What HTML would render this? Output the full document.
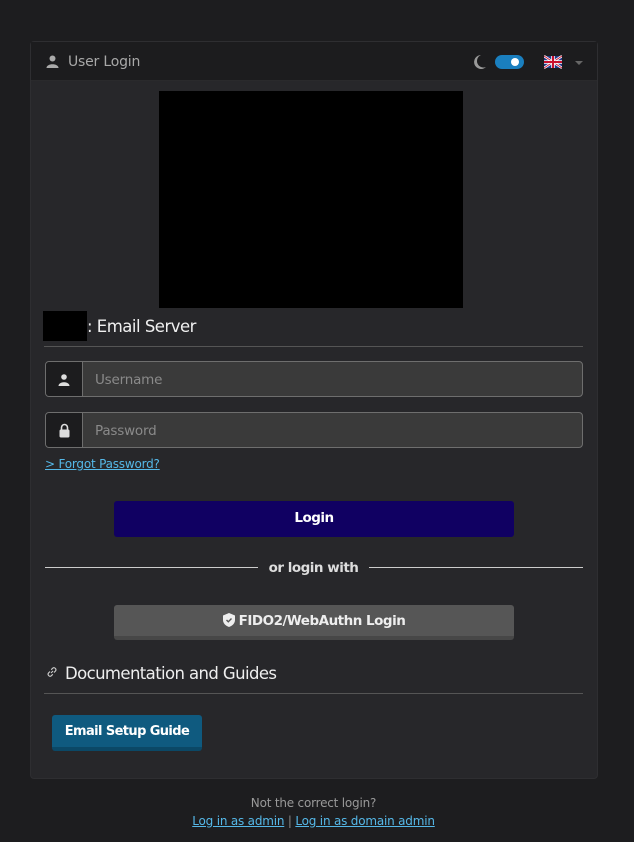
<!DOCTYPE html>
<html><head><meta charset="utf-8"><style>
*{box-sizing:border-box;margin:0;padding:0}
body{width:634px;height:842px;background:#1d1d1f;font-family:"DejaVu Sans","Liberation Sans",sans-serif;position:relative;overflow:hidden;color:#e8e8e8}
.a{position:absolute}
.card{left:30px;top:41px;width:568px;height:738px;background:#27272a;border:1px solid #2e2e31;border-radius:4px}
.hdr{left:31px;top:42px;width:566px;height:39px;background:#1c1c1e;border-bottom:1px solid #2a2a2c}
.inp{left:45px;width:538px;height:36px;border:1px solid #6e6e6e;border-radius:4px;background:#3a3a3a;overflow:hidden}
.inp .ic{position:absolute;left:0;top:0;width:37px;height:100%;background:#1c1c1e;border-right:1px solid #6e6e6e}
.inp span{position:absolute;left:49px;top:10px;font-size:13.5px;color:#8a8a8a;letter-spacing:-0.2px}
a{color:#55b8e8;text-decoration:underline}
.b{font-weight:bold;letter-spacing:-0.5px}
</style></head><body>
<div class="a card"></div>
<div class="a hdr"></div>
<svg class="a" style="left:46px;top:55px" width="13" height="13" viewBox="0 0 13 13"><circle cx="6.5" cy="3.5" r="3" fill="#aaa"/><path d="M0.5 13 C0.5 8 12.5 8 12.5 13Z" fill="#aaa"/></svg>
<div class="a" style="left:68px;top:54px;font-size:14px;color:#a8a8a8;letter-spacing:-0.2px">User Login</div>
<svg class="a" style="left:472px;top:54px" width="15" height="16" viewBox="0 0 15 16"><path d="M9 1 A7 7 0 1 0 14 13 A6 6 0 0 1 9 1Z" fill="#999"/></svg>
<div class="a" style="left:495px;top:55px;width:29px;height:14px;border-radius:7px;background:#1a7fbf"></div>
<div class="a" style="left:511px;top:58px;width:8px;height:8px;border-radius:50%;background:#fff"></div>
<svg class="a" style="left:544px;top:55px" width="18" height="14" viewBox="0 0 60 40"><rect width="60" height="40" fill="#1e3a8a"/><path d="M0 0L60 40M60 0L0 40" stroke="#fff" stroke-width="8"/><path d="M0 0L60 40M60 0L0 40" stroke="#c8102e" stroke-width="3"/><path d="M30 0V40M0 20H60" stroke="#fff" stroke-width="12"/><path d="M30 0V40M0 20H60" stroke="#c8102e" stroke-width="7"/></svg>
<div class="a" style="left:575px;top:61px;border:4px solid transparent;border-top:4px solid #666"></div>
<div class="a" style="left:159px;top:91px;width:304px;height:217px;background:#000"></div>
<div class="a" style="left:43px;top:311px;width:44px;height:30px;background:#000"></div>
<div class="a" style="left:87px;top:317px;font-size:16.5px;color:#f0f0f0;letter-spacing:-0.5px">: Email Server</div>
<div class="a" style="left:44px;top:346px;width:539px;height:1px;background:#555"></div>
<div class="a inp" style="top:361px"><div class="ic"><svg style="position:absolute;left:12px;top:12px" width="12" height="12" viewBox="0 0 12 12"><circle cx="6" cy="3" r="2.8" fill="#ddd"/><path d="M0.5 12C0.5 7 11.5 7 11.5 12Z" fill="#ddd"/></svg></div><span>Username</span></div>
<div class="a inp" style="top:412px"><div class="ic"><svg style="position:absolute;left:13px;top:10px" width="11" height="15" viewBox="0 0 11 15"><path d="M2.5 7V4.5a3 3 0 0 1 6 0V7" stroke="#ddd" stroke-width="1.6" fill="none"/><rect x="0.5" y="6.5" width="10" height="8" rx="1.5" fill="#ddd"/></svg></div><span>Password</span></div>
<a class="a" style="left:45px;top:457px;font-size:12px;letter-spacing:-0.2px">&gt; Forgot Password?</a>
<div class="a b" style="left:114px;top:501px;width:400px;height:36px;background:#100062;border-radius:3px;color:#fff;font-size:13.5px;text-align:center;line-height:35px">Login</div>
<div class="a" style="left:45px;top:567px;width:213px;height:1px;background:#ccc"></div>
<div class="a" style="left:369px;top:567px;width:214px;height:1px;background:#ccc"></div>
<div class="a b" style="left:258px;top:560px;width:111px;text-align:center;font-size:13.5px;color:#ddd;background:#27272a">or login with</div>
<div class="a b" style="left:114px;top:605px;width:400px;height:35px;background:#565656;border-bottom:4px solid #474747;border-radius:3px;color:#eee;font-size:13.5px;text-align:center;line-height:32px"><svg width="12" height="14" viewBox="0 0 12 14" style="vertical-align:-2px;margin-right:4px"><path d="M6 0L12 2.5V7C12 10.5 9 13 6 14 3 13 0 10.5 0 7V2.5Z" fill="#eee"/><path d="M3.5 7L5.3 8.8 8.5 5.5" stroke="#565656" stroke-width="1.4" fill="none"/></svg>FIDO2/WebAuthn Login</div>
<svg class="a" style="left:46px;top:666px" width="12" height="12" viewBox="0 0 12 12"><path d="M5 7L7 5M4 5.5L2.5 7a2 2 0 0 0 2.8 2.8L6.8 8.3M8 6.5L9.5 5A2 2 0 0 0 6.7 2.2L5.2 3.7" stroke="#ccc" stroke-width="1.1" fill="none"/></svg>
<div class="a" style="left:65px;top:664px;font-size:16.5px;color:#eee;letter-spacing:-0.6px">Documentation and Guides</div>
<div class="a" style="left:44px;top:693px;width:539px;height:1px;background:#555"></div>
<div class="a b" style="left:52px;top:715px;width:150px;height:36px;background:#0f5a7f;border-bottom:4px solid #0b4866;border-radius:3px;color:#fff;font-size:13px;text-align:center;line-height:34px;letter-spacing:-0.6px">Email Setup Guide</div>
<div class="a" style="left:0;top:796px;width:627px;text-align:center;font-size:12px;color:#999;letter-spacing:-0.2px">Not the correct login?</div>
<div class="a" style="left:0;top:814px;width:627px;text-align:center;font-size:12px;color:#888;letter-spacing:-0.2px"><a>Log in as admin</a> | <a>Log in as domain admin</a></div>
</body></html>
